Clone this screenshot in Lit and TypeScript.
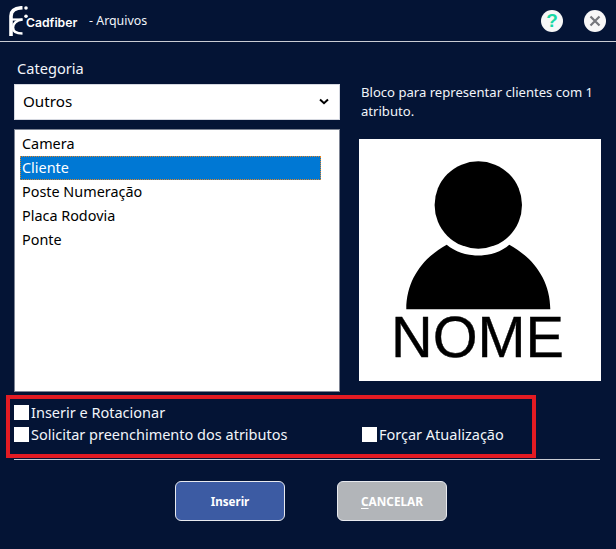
import { LitElement, html, css } from "lit";
import { customElement } from "lit/decorators.js";

@customElement("app-root")
export class AppRoot extends LitElement {
  static styles = css`
    :host { display: block; width: 616px; height: 549px; background: #041435; color: #fff; font-family: "Noto Sans", "Open Sans", sans-serif; overflow: hidden; }
    .header { height: 41px; border-bottom: 1px solid #c9ccd3; display: flex; align-items: center; }
    .logo { margin: 0 0 0 9px; display: block; flex: none; }
    .brand { font: 600 12.2px "Inter", sans-serif; margin: 4px 0 0 -4px; width: 53px; white-space: nowrap; }
    .title { font-size: 12.4px; margin: 0 0 0 10px; flex: 1; color: #f2f5fa; }
    .round { width: 22px; height: 22px; border-radius: 50%; background: #f7f7f7; display: flex; align-items: center; justify-content: center; }
    .help { margin-right: 21px; color: #19d8a4; font: 900 19px "Liberation Sans", sans-serif; }
    .close { margin-right: 10px; }
    .main { display: grid; grid-template-columns: 326px 242px; column-gap: 19px; padding: 0 0 0 14px; }
    .left { display: flex; flex-direction: column; }
    .label { font-size: 14.6px; line-height: 20px; margin: 16px 0 6px 3px; color: #f2f5fa; }
    .select { height: 36px; box-sizing: border-box; background: #fff; border: 1px solid #d5d8e0; color: #000; display: flex; align-items: center; justify-content: space-between; padding: 0 10px 2px 8px; font-size: 15.2px; }
    .list { margin-top: 9px; height: 263px; box-sizing: border-box; background: #fff; border: 1px solid #7d8494; color: #000; padding: 2px 18px 0 5px; font-size: 14.4px; }
    .item { height: 24px; line-height: 24px; padding-left: 2px; }
    .item.sel { background: #0078d4; color: #fff; outline: 1px dotted #e0862a; outline-offset: -1px; }
    .right { padding-top: 41px; }
    .desc { font-size: 13.1px; line-height: 19px; height: 56px; margin: 0 0 0 2px; color: #f2f5fa; }
    .preview { display: block; width: 242px; height: 242px; background: #fff; }
    .options { margin: 3px 0 0 6px; width: 530px; height: 63px; box-sizing: border-box; border: 4px solid #e31b23; display: grid; grid-template-columns: 351px 1fr; grid-template-rows: 22px 22px; padding: 2px 0 0 4px; align-content: start; }
    .opt { display: flex; align-items: center; font-size: 14.5px; color: #f2f5fa; gap: 2px; white-space: nowrap; }
    .opt.last { margin-left: -3px; }
    .box { width: 15px; height: 15px; background: #fff; flex: none; }
    .full { grid-column: 1 / 3; }
    .rule { height: 1px; background: #c9ccd3; margin: 1px 16px 0 14px; }
    .actions { display: flex; gap: 52px; margin: 21px 0 0 175px; }
    .btn { width: 110px; height: 40px; box-sizing: border-box; border: 1px solid #e8eaef; border-radius: 6px; display: flex; align-items: center; justify-content: center; font-size: 11.6px; font-weight: 700; color: #fff; }
    .primary { background: #3c5ba3; }
    .muted { background: #b2b5b9; font-size: 11.8px; }
    u { text-underline-offset: 2px; }
    svg text { font-family: "Liberation Sans", sans-serif; }
  `;

  render() {
    const items = ["Camera", "Cliente", "Poste Numeração", "Placa Rodovia", "Ponte"];
    return html`
      <div class="header">
        <svg class="logo" width="21" height="30" viewBox="0 0 21 30" fill="none">
          <path d="M2 30V10C2 4.5 6 2 13.5 1.7" stroke="#fff" stroke-width="3.6"/>
          <path d="M3 13.5H13.5" stroke="#fff" stroke-width="2.2"/>
          <path d="M13.5 13.5C7 14 4 18 4 21.5C4 25 7 27.5 13.5 27.5" stroke="#fff" stroke-width="2.6"/>
          <circle cx="17" cy="2" r="1.8" fill="#fff"/>
          <circle cx="17" cy="10.3" r="1.8" fill="#fff"/>
        </svg>
        <span class="brand">Cadfiber</span>
        <span class="title">- Arquivos</span>
        <div class="round help">?</div>
        <div class="round close">
          <svg width="12" height="12" viewBox="0 0 12 12"><path d="M1.5 1.5L10.5 10.5M10.5 1.5L1.5 10.5" stroke="#75777c" stroke-width="2.2"/></svg>
        </div>
      </div>
      <div class="main">
        <div class="left">
          <div class="label">Categoria</div>
          <div class="select">
            <span>Outros</span>
            <svg width="10" height="7" viewBox="0 0 10 7"><path d="M1 1.5L5 5.2L9 1.5" fill="none" stroke="#000" stroke-width="2"/></svg>
          </div>
          <div class="list">
            ${items.map((t) => html`<div class="item ${t === "Cliente" ? "sel" : ""}">${t}</div>`)}
          </div>
        </div>
        <div class="right">
          <p class="desc">Bloco para representar clientes com 1 atributo.</p>
          <svg class="preview" viewBox="0 0 242 242">
            <circle cx="119.3" cy="66" r="43.7" fill="#000"/>
            <path d="M47.3 170.3C47.3 140 65 118 87.7 105.7C96 112.5 107 116.5 119.3 116.5C131.5 116.5 142.5 112.5 150.3 105.7C173 118 191.3 140 191.3 170.3Z" fill="#000"/>
            <text x="32" y="217.5" font-size="58" fill="#000" stroke="#000" stroke-width="0.4" textLength="173" lengthAdjust="spacingAndGlyphs">NOME</text>
          </svg>
        </div>
      </div>
      <div class="options">
        <label class="opt full"><span class="box"></span>Inserir e Rotacionar</label>
        <label class="opt"><span class="box"></span>Solicitar preenchimento dos atributos</label>
        <label class="opt last"><span class="box"></span>Forçar Atualização</label>
      </div>
      <div class="rule"></div>
      <div class="actions">
        <div class="btn primary">Inserir</div>
        <div class="btn muted"><span><u>C</u>ANCELAR</span></div>
      </div>
    `;
  }
}
